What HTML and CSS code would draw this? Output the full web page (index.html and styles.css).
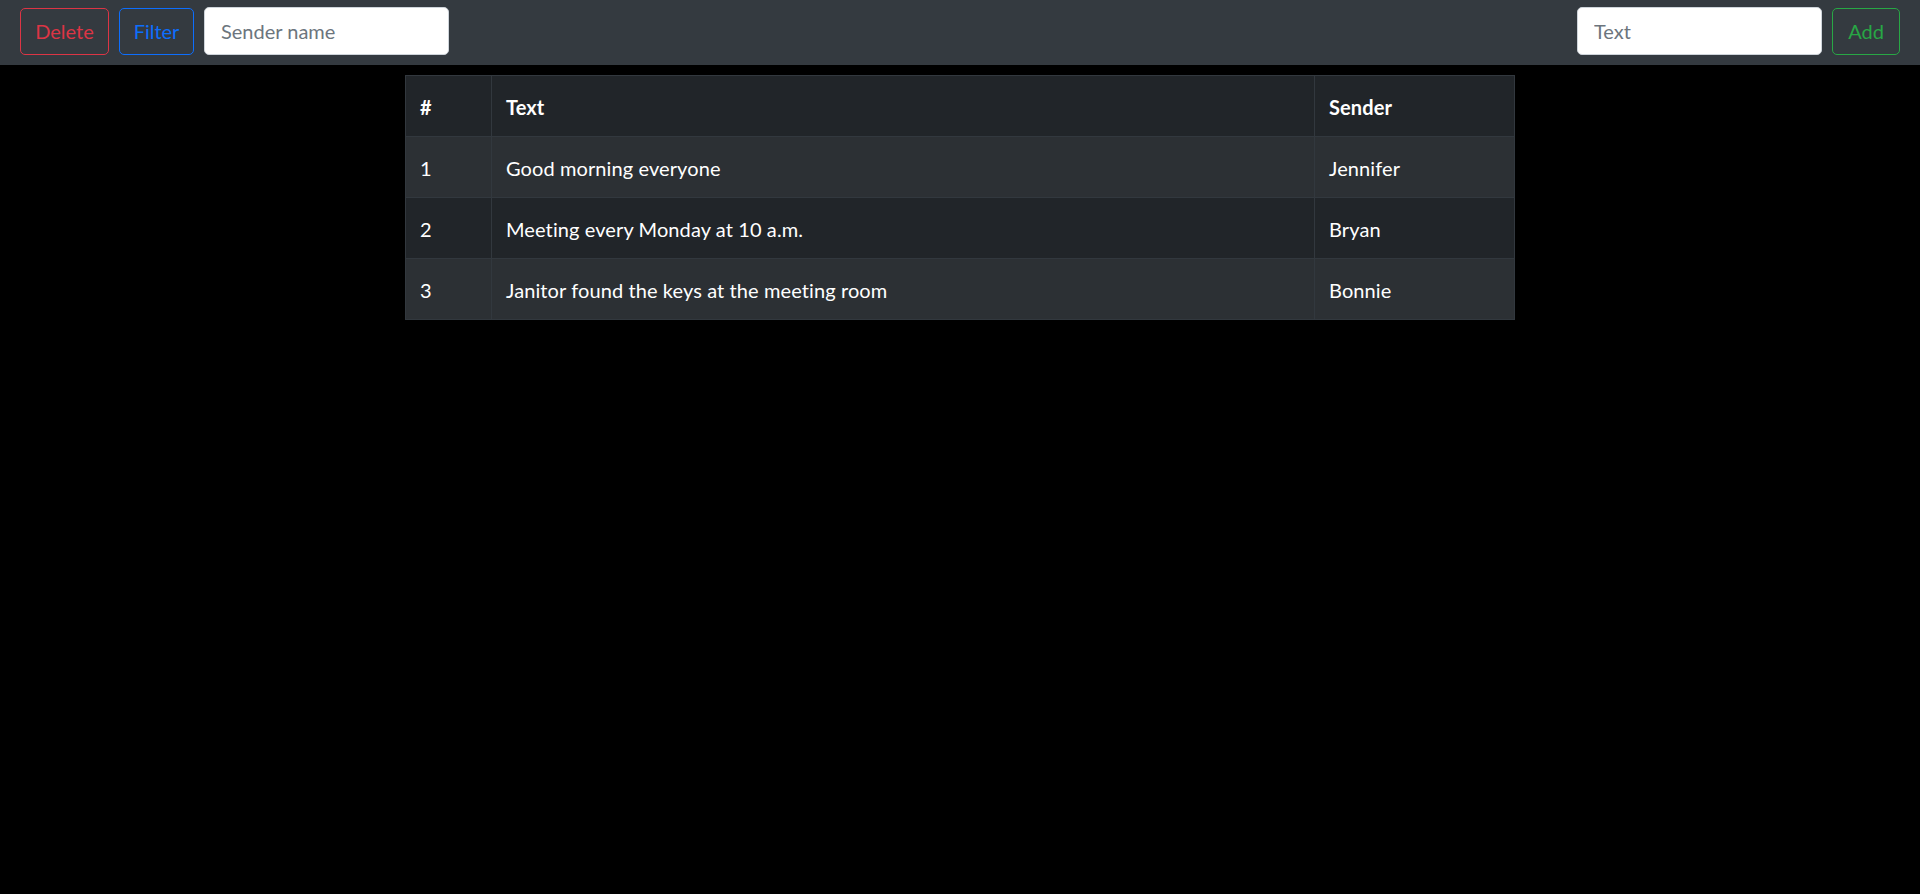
FILE: index.html
```html
<!DOCTYPE html>
<html lang="en">
<head>
<meta charset="utf-8">
<title>Messages</title>
<link rel="stylesheet" href="styles.css">
</head>
<body>
<nav class="topbar">
  <div class="group">
    <button class="btn btn-danger">Delete</button>
    <button class="btn btn-primary">Filter</button>
    <input class="field" type="text" placeholder="Sender name">
  </div>
  <div class="group">
    <input class="field" type="text" placeholder="Text">
    <button class="btn btn-success">Add</button>
  </div>
</nav>
<main class="content">
  <table class="messages">
    <thead>
      <tr><th class="col-num">#</th><th>Text</th><th class="col-sender">Sender</th></tr>
    </thead>
    <tbody>
      <tr><td>1</td><td>Good morning everyone</td><td>Jennifer</td></tr>
      <tr><td>2</td><td>Meeting every Monday at 10 a.m.</td><td>Bryan</td></tr>
      <tr><td>3</td><td>Janitor found the keys at the meeting room</td><td>Bonnie</td></tr>
    </tbody>
  </table>
</main>
</body>
</html>
```

FILE: styles.css
```css
html, body {
  margin: 0;
  padding: 0;
}
body {
  background: #000;
  font-family: "Segoe UI", Lato, "Open Sans", sans-serif;
  font-size: 20px;
  color: #fff;
}
.topbar {
  box-sizing: border-box;
  height: 65px;
  background: #343a40;
  display: flex;
  justify-content: space-between;
  align-items: flex-start;
  padding: 7px 20px 0 20px;
}
.group {
  display: flex;
  gap: 10px;
  align-items: center;
}
.btn {
  box-sizing: border-box;
  height: 47px;
  padding: 0;
  background: transparent;
  border: 1px solid;
  border-radius: 5px;
  font-family: inherit;
  font-size: 20px;
  line-height: 1;
  text-align: center;
  cursor: pointer;
}
.btn-danger { width: 89px; color: #dc3545; border-color: #dc3545; }
.btn-primary { width: 75px; color: #0d6efd; border-color: #0d6efd; }
.btn-success { width: 68px; color: #28a745; border-color: #28a745; }
.field {
  box-sizing: border-box;
  width: 245px;
  height: 48px;
  padding: 0 16px;
  border: 1px solid #ced4da;
  border-radius: 5px;
  background: #fff;
  font-family: inherit;
  font-size: 20px;
  color: #212529;
}
.field::placeholder { color: #6c757d; }
.content {
  padding-top: 10px;
}
.messages {
  width: 1110px;
  margin: 0 auto;
  border-collapse: collapse;
  background: #212529;
}
.messages th, .messages td {
  border: 1px solid #32383e;
  padding: 16px 14px 14px 14px;
  line-height: 30px;
  text-align: left;
  vertical-align: top;
  letter-spacing: 0.1px;
}
.messages th { font-weight: 700; }
.messages tbody tr:nth-child(odd) { background: #2c3034; }
.col-num { width: 57px; }
.col-sender { width: 171px; }
```
